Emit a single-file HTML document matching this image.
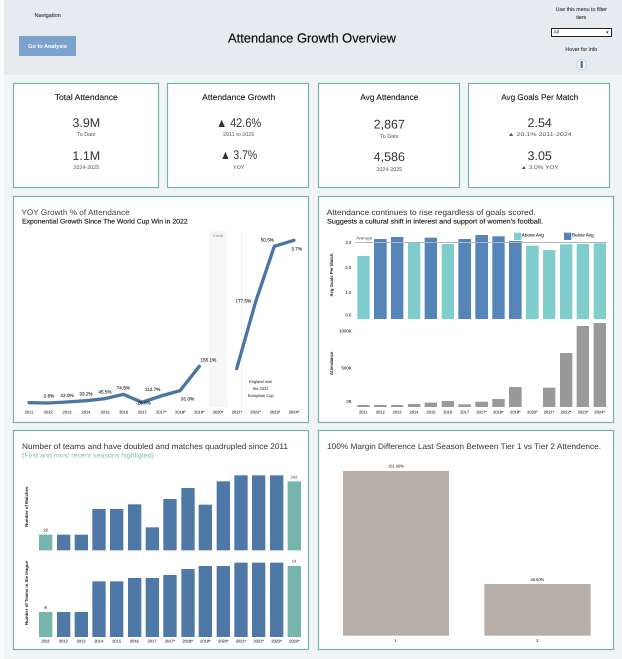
<!DOCTYPE html>
<html><head><meta charset="utf-8"><title>Attendance Growth Overview</title>
<style>
html,body{margin:0;padding:0;background:#f1f5f6;width:622px;height:659px;overflow:hidden}
svg{display:block;font-family:"Liberation Sans",sans-serif;text-rendering:geometricPrecision}
text{fill:#333}
.m{text-anchor:middle;dominant-baseline:central}
.t{dominant-baseline:central}
.card{fill:#fff;stroke:#76b5ae;stroke-width:1.2}
.s{font-size:5.4px;fill:#555}
.b{font-size:12.5px;fill:#333}
.ct{font-size:8.3px;fill:#111;stroke:#111;stroke-width:.08px}
.z{font-size:14px;fill:#222;stroke:#222;stroke-width:.3px}
.x{font-size:12px;fill:#222;stroke:#444;stroke-width:.3px}
.l{font-size:13px;fill:#333;stroke:#333;stroke-width:.3px}
.r{font-size:13px;font-weight:bold;fill:#222}
.h{stroke:#222;stroke-width:.5px}
</style></head><body>
<svg width="622" height="659" viewBox="0 0 622 659" xmlns="http://www.w3.org/2000/svg">
<rect width="622" height="659" fill="#f1f5f6"/>
<rect width="4" height="659" fill="#fafbfb"/>
<rect x="4" width="618" height="75" fill="#e6ebf0"/>

<text class="m" x="47.7" y="16" font-size="5.6" stroke="#333" stroke-width=".1">Navigation</text>
<rect x="19" y="36" width="57" height="20" fill="#7ba3cb"/>
<text class="m" x="47.5" y="47" font-size="5.6" font-weight="bold" style="fill:#fff">Go to Analysis</text>
<text class="t" x="228" y="38" font-size="13" textLength="168" lengthAdjust="spacingAndGlyphs" stroke="#111" stroke-width=".22" style="fill:#111">Attendance Growth Overview</text>
<text class="m" x="581.3" y="10" font-size="5.3" stroke="#333" stroke-width=".1">Use this menu to filter</text>
<text class="m" x="581.3" y="18" font-size="5.3" stroke="#333" stroke-width=".1">tiers</text>
<rect x="551.5" y="28.5" width="60" height="8" fill="#fff" stroke="#222" stroke-width="1"/>
<text class="t" x="553.5" y="32.5" font-size="5">All</text>
<path d="M605.8 31.5h3l-1.5 2z" fill="#333"/>
<text class="m" x="581.3" y="50" font-size="5.3" stroke="#333" stroke-width=".1">Hover for info</text>
<circle cx="581.7" cy="64.5" r="5" fill="#fff" stroke="#bcd6dc" stroke-width="1"/>
<rect x="580.7" y="61" width="2" height="7" fill="#2f6688"/>

<rect class="card" x="13.5" y="83.5" width="145" height="104"/>
<rect class="card" x="167.5" y="83.5" width="141" height="104"/>
<rect class="card" x="318.5" y="83.5" width="141" height="104"/>
<rect class="card" x="468.5" y="83.5" width="141" height="104"/>

<text class="m ct" x="86.3" y="97" textLength="63" lengthAdjust="spacingAndGlyphs">Total Attendance</text>
<text class="m b" x="86.3" y="123">3.9M</text>
<text class="m s" x="86.3" y="135">To Date</text>
<text class="m b" x="86.3" y="156">1.1M</text>
<text class="m s" x="86.3" y="168">2024-2025</text>

<text class="m ct" x="238.7" y="97" textLength="73" lengthAdjust="spacingAndGlyphs">Attendance Growth</text>
<text class="m b" x="238.7" y="123" textLength="45" lengthAdjust="spacingAndGlyphs">▲ 42.6%</text>
<text class="m s" x="238.7" y="135">2011 to 2025</text>
<text class="m b" x="238.7" y="155" textLength="37" lengthAdjust="spacingAndGlyphs">▲ 3.7%</text>
<text class="m s" x="238.7" y="168">YOY</text>

<text class="m ct" x="389.3" y="97" textLength="58" lengthAdjust="spacingAndGlyphs">Avg Attendance</text>
<text class="m b" x="389.3" y="124.5">2,867</text>
<text class="m s" x="389.3" y="137">To Date</text>
<text class="m b" x="389.3" y="157">4,586</text>
<text class="m s" x="389.3" y="170">2024-2025</text>

<text class="m ct" x="539.7" y="97" textLength="77" lengthAdjust="spacingAndGlyphs">Avg Goals Per Match</text>
<text class="m b" x="539.7" y="123">2.54</text>
<text class="m s" x="539.7" y="135" textLength="64" lengthAdjust="spacingAndGlyphs">▲ 20.1% 2011-2024</text>
<text class="m b" x="539.7" y="156">3.05</text>
<text class="m s" x="539.7" y="168" textLength="38" lengthAdjust="spacingAndGlyphs">▲ 3.0% YOY</text>

<rect class="card" x="13.5" y="196.5" width="295" height="226"/>
<rect class="card" x="318.5" y="196.5" width="295" height="226"/>
<rect class="card" x="13.5" y="430.5" width="295" height="219"/>
<rect class="card" x="318.5" y="430.5" width="295" height="219"/>

<!-- YOY chart -->
<g transform="translate(10 195) scale(.33333)">
<text class="t" x="34" y="52" font-size="24" textLength="325" lengthAdjust="spacingAndGlyphs" style="fill:#444">YOY Growth % of Attendance</text>
<text class="t h" x="36" y="80" font-size="20" textLength="497" lengthAdjust="spacingAndGlyphs" style="fill:#222">Exponential Growth Since The World Cup Win in 2022</text>
<rect x="597" y="108" width="56" height="528" fill="#f7f7f7"/>
<text class="m" x="624" y="122" font-size="12" style="fill:#888">Covid</text>
<rect x="694" y="110" width="2" height="526" fill="#e8e8e8"/>
<path d="M57 623L115 624 171 621 228 617 285 611 340 598 396 622 453 603 510 587 568 514" fill="none" stroke="#4a76a4" stroke-width="10" stroke-linecap="round" stroke-linejoin="round"/>
<path d="M680 521L737 320 793 154 852 136" fill="none" stroke="#4a76a4" stroke-width="10" stroke-linecap="round" stroke-linejoin="round"/>
<text class="m z" x="117" y="603">2.6%</text>
<text class="m z" x="171" y="601">22.0%</text>
<text class="m z" x="228" y="597">33.2%</text>
<text class="m z" x="285" y="590">45.5%</text>
<text class="m z" x="340" y="578">74.5%</text>
<text class="m z" x="400" y="624">-28.6%</text>
<text class="m z" x="428" y="583">112.7%</text>
<text class="m z" x="533" y="612">91.0%</text>
<text class="m z" x="595" y="495">155.1%</text>
<text class="m z" x="700" y="318">177.5%</text>
<text class="m z" x="772" y="135">50.5%</text>
<text class="m z" x="860" y="162">3.7%</text>
<text class="m x" x="752" y="560" style="fill:#555">England won</text>
<text class="m x" x="752" y="581" style="fill:#555">the 2022</text>
<text class="m x" x="752" y="602" style="fill:#555">European Cup</text>
<text class="m x" x="57" y="652">2011</text><text class="m x" x="115" y="652">2012</text><text class="m x" x="171" y="652">2013</text><text class="m x" x="228" y="652">2014</text><text class="m x" x="285" y="652">2015</text><text class="m x" x="341" y="652">2016</text><text class="m x" x="397" y="652">2017</text><text class="m x" x="454" y="652">2017*</text><text class="m x" x="511" y="652">2018*</text><text class="m x" x="568" y="652">2019*</text><text class="m x" x="624" y="652">2020*</text><text class="m x" x="681" y="652">2021*</text><text class="m x" x="737" y="652">2022*</text><text class="m x" x="795" y="652">2023*</text><text class="m x" x="852" y="652">2024*</text>
</g>

<!-- Goals + attendance chart -->
<g transform="translate(315 195) scale(.33333)">
<text class="t" x="35" y="52" font-size="24" textLength="627" lengthAdjust="spacingAndGlyphs" style="fill:#333">Attendance continues to rise regardless of goals scored.</text>
<text class="t h" x="36" y="80" font-size="20" textLength="648" lengthAdjust="spacingAndGlyphs" style="fill:#222">Suggests a cultural shift in interest and support of women's football.</text>
<rect x="127" y="183" width="37" height="189" fill="#7fcdcd"/>
<rect x="177" y="132" width="38" height="240" fill="#5585b8"/>
<rect x="228" y="126" width="37" height="246" fill="#5585b8"/>
<rect x="279" y="143" width="37" height="229" fill="#7fcdcd"/>
<rect x="329" y="128" width="37" height="244" fill="#5585b8"/>
<rect x="380" y="147" width="37" height="225" fill="#7fcdcd"/>
<rect x="430" y="132" width="38" height="240" fill="#5585b8"/>
<rect x="481" y="120" width="38" height="252" fill="#5585b8"/>
<rect x="532" y="124" width="37" height="248" fill="#5585b8"/>
<rect x="582" y="138" width="38" height="234" fill="#5585b8"/>
<rect x="633" y="152" width="38" height="220" fill="#7fcdcd"/>
<rect x="684" y="165" width="37" height="207" fill="#7fcdcd"/>
<rect x="735" y="148" width="37" height="224" fill="#7fcdcd"/>
<rect x="785" y="147" width="37" height="225" fill="#7fcdcd"/>
<rect x="836" y="145" width="37" height="227" fill="#7fcdcd"/>
<rect x="120" y="141" width="756" height="3" fill="#b5b5b5"/>
<text class="t" x="123" y="129" font-size="13" font-style="italic" style="fill:#555">Average</text>
<rect x="597" y="113" width="22" height="22" fill="#7fcdcd"/>
<text class="t" x="620" y="120" font-size="14" stroke="#333" stroke-width=".3">Above Avg</text>
<rect x="747" y="113" width="22" height="22" fill="#5585b8"/>
<text class="t" x="771" y="120" font-size="14" stroke="#333" stroke-width=".3">Below Avg</text>
<text class="m l" x="100" y="143">3.0</text>
<text class="m l" x="100" y="218">2.0</text>
<text class="m l" x="100" y="293">1.0</text>
<text class="m l" x="100" y="360">0.0</text>
<text class="m r" transform="translate(49 240) rotate(-90)">Avg Goals Per Match</text>
<rect x="127" y="630" width="37" height="6" fill="#999"/>
<rect x="177" y="630" width="38" height="6" fill="#999"/>
<rect x="228" y="630" width="37" height="6" fill="#999"/>
<rect x="279" y="627" width="37" height="9" fill="#999"/>
<rect x="329" y="623" width="37" height="13" fill="#999"/>
<rect x="380" y="618" width="37" height="18" fill="#999"/>
<rect x="430" y="628" width="38" height="8" fill="#999"/>
<rect x="481" y="620" width="38" height="16" fill="#999"/>
<rect x="532" y="612" width="37" height="24" fill="#999"/>
<rect x="582" y="576" width="38" height="60" fill="#999"/>
<rect x="684" y="578" width="37" height="58" fill="#999"/>
<rect x="735" y="474" width="37" height="162" fill="#999"/>
<rect x="785" y="393" width="37" height="243" fill="#999"/>
<rect x="836" y="384" width="37" height="252" fill="#999"/>
<text class="l" x="110" y="408" text-anchor="end" dominant-baseline="central">1000K</text>
<text class="l" x="110" y="519" text-anchor="end" dominant-baseline="central">500K</text>
<text class="l" x="110" y="620" text-anchor="end" dominant-baseline="central">0K</text>
<text class="m r" transform="translate(49 505) rotate(-90)">Attendance</text>
<text class="m x" x="145" y="652">2011</text><text class="m x" x="196" y="652">2012</text><text class="m x" x="246" y="652">2013</text><text class="m x" x="297" y="652">2014</text><text class="m x" x="348" y="652">2015</text><text class="m x" x="398" y="652">2016</text><text class="m x" x="449" y="652">2017</text><text class="m x" x="500" y="652">2017*</text><text class="m x" x="550" y="652">2018*</text><text class="m x" x="601" y="652">2019*</text><text class="m x" x="652" y="652">2020*</text><text class="m x" x="702" y="652">2021*</text><text class="m x" x="753" y="652">2022*</text><text class="m x" x="804" y="652">2023*</text><text class="m x" x="854" y="652">2024*</text>
</g>

<!-- Teams + matches chart -->
<g transform="translate(10 428) scale(.33333)">
<text class="t" x="36" y="55" font-size="24" textLength="798" lengthAdjust="spacingAndGlyphs" style="fill:#333">Number of teams and have doubled and matches quadrupled since 2011</text>
<text class="t" x="36" y="83" font-size="20" textLength="396" lengthAdjust="spacingAndGlyphs" style="fill:#7fbfb5">(First and most recent seasons highligted)</text>
<rect x="87" y="320" width="40" height="47" fill="#76b5ae"/>
<rect x="141" y="320" width="40" height="47" fill="#4e79a7"/>
<rect x="194" y="320" width="40" height="47" fill="#4e79a7"/>
<rect x="247" y="243" width="40" height="124" fill="#4e79a7"/>
<rect x="300" y="243" width="40" height="124" fill="#4e79a7"/>
<rect x="354" y="229" width="40" height="138" fill="#4e79a7"/>
<rect x="407" y="298" width="40" height="69" fill="#4e79a7"/>
<rect x="460" y="213" width="40" height="154" fill="#4e79a7"/>
<rect x="514" y="180" width="40" height="187" fill="#4e79a7"/>
<rect x="566" y="230" width="40" height="137" fill="#4e79a7"/>
<rect x="620" y="160" width="40" height="207" fill="#4e79a7"/>
<rect x="673" y="142" width="40" height="225" fill="#4e79a7"/>
<rect x="726" y="142" width="40" height="225" fill="#4e79a7"/>
<rect x="780" y="142" width="40" height="225" fill="#4e79a7"/>
<rect x="833" y="160" width="40" height="207" fill="#76b5ae"/>
<text class="m x" x="107" y="306">22</text>
<text class="m x" x="852" y="147" style="fill:#777">242</text>
<text class="m r" transform="translate(49 236) rotate(-90)">Number of Matches</text>
<rect x="87" y="552" width="40" height="75" fill="#76b5ae"/>
<rect x="141" y="552" width="40" height="75" fill="#4e79a7"/>
<rect x="194" y="552" width="40" height="75" fill="#4e79a7"/>
<rect x="247" y="460" width="40" height="167" fill="#4e79a7"/>
<rect x="300" y="460" width="40" height="167" fill="#4e79a7"/>
<rect x="354" y="450" width="40" height="177" fill="#4e79a7"/>
<rect x="407" y="450" width="40" height="177" fill="#4e79a7"/>
<rect x="460" y="441" width="40" height="186" fill="#4e79a7"/>
<rect x="514" y="423" width="40" height="204" fill="#4e79a7"/>
<rect x="566" y="414" width="40" height="213" fill="#4e79a7"/>
<rect x="620" y="414" width="40" height="213" fill="#4e79a7"/>
<rect x="673" y="404" width="40" height="223" fill="#4e79a7"/>
<rect x="726" y="404" width="40" height="223" fill="#4e79a7"/>
<rect x="780" y="404" width="40" height="223" fill="#4e79a7"/>
<rect x="833" y="414" width="40" height="213" fill="#76b5ae"/>
<text class="m x" x="107" y="539">8</text>
<text class="m x" x="852" y="400" style="fill:#777">14</text>
<text class="m r" transform="translate(49 495) rotate(-90)">Number of Teams in the league</text>
<text class="m x" x="107" y="640">2011</text><text class="m x" x="160" y="640">2012</text><text class="m x" x="213" y="640">2013</text><text class="m x" x="266" y="640">2014</text><text class="m x" x="320" y="640">2015</text><text class="m x" x="373" y="640">2016</text><text class="m x" x="426" y="640">2017</text><text class="m x" x="480" y="640">2017*</text><text class="m x" x="533" y="640">2018*</text><text class="m x" x="586" y="640">2019*</text><text class="m x" x="640" y="640">2020*</text><text class="m x" x="693" y="640">2021*</text><text class="m x" x="746" y="640">2022*</text><text class="m x" x="800" y="640">2023*</text><text class="m x" x="853" y="640">2024*</text>
</g>

<!-- Tier margin chart -->
<g transform="translate(315 428) scale(.33333)">
<text class="t" x="36" y="55" font-size="24" textLength="822" lengthAdjust="spacingAndGlyphs" style="fill:#333">100% Margin Difference Last Season Between Tier 1 vs Tier 2 Attendence.</text>
<rect x="84" y="129" width="318" height="494" fill="#b8aea8"/>
<rect x="508" y="468" width="319" height="155" fill="#b8aea8"/>
<text class="m x" x="243" y="115" style="fill:#555">151.06%</text>
<text class="m x" x="667" y="455" style="fill:#444">46.50%</text>
<text class="m x" x="242" y="638" font-size="13">1</text>
<text class="m x" x="667" y="638" font-size="13">2</text>
</g>
</svg>
</body></html>
